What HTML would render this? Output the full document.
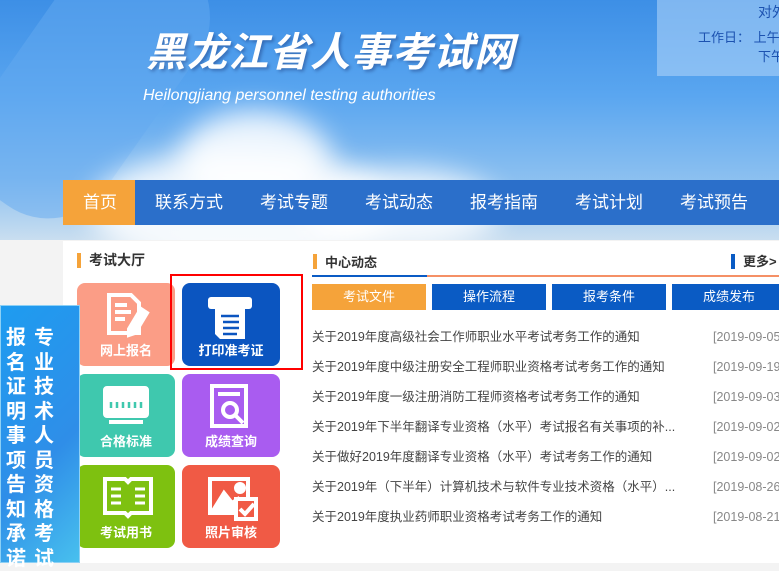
<!DOCTYPE html>
<html><head><meta charset="utf-8"><style>
*{margin:0;padding:0;box-sizing:border-box}
body{width:779px;height:563px;overflow:hidden;position:relative;font-family:"Liberation Sans","Noto Sans CJK SC",sans-serif;background:#f3f3f3}
.hdr{position:absolute;left:0;top:0;width:779px;height:240px;background:linear-gradient(180deg,#3d8fe6 0%,#5aa6f0 40%,#8cc0f0 75%,#c9def0 100%);overflow:hidden}
.cloud{position:absolute;border-radius:50%;background:rgba(255,255,255,.85);filter:blur(14px)}
.title{position:absolute;left:146px;top:28px;font-size:40px;line-height:50px;color:#fff;font-style:italic;font-weight:bold;letter-spacing:1px;text-shadow:2px 2px 3px rgba(0,0,60,.3);white-space:nowrap}
.sub{position:absolute;left:143px;top:87px;font-size:16px;color:#fff;font-style:italic;white-space:nowrap}
.box{position:absolute;left:657px;top:0;width:122px;height:76px;background:rgba(180,215,250,.55)}
.hdr .t{position:absolute;white-space:nowrap;color:#1c52b0;font-size:13px;line-height:16px}
.nav{position:absolute;left:63px;top:180px;width:716px;height:45px;background:#2b6fca;display:flex}
.nav div{color:#fff;font-size:17px;line-height:45px;padding:0 0 0 20px;width:105px;white-space:nowrap}
.nav .on{background:#f5a33a;width:72px}
.panel{position:absolute;left:63px;top:241px;width:716px;height:322px;background:#fff}
.lbl{position:absolute;font-size:14px;color:#333;font-weight:bold;line-height:16px;white-space:nowrap}
.bar{position:absolute;width:4px;height:15px}
.tile{position:absolute;width:98px;height:83px;border-radius:8px;color:#fff;font-size:13px;font-weight:bold;text-align:center}
.tile span{position:absolute;left:0;right:0;bottom:7px}
.tile svg{position:absolute;left:24px;top:8px}
.ban{position:absolute;left:0;top:305px;width:80px;height:258px;background:linear-gradient(135deg,#1e9cf0,#2f8ee8 60%,#48c0ee);border:1px solid #8cd0f5}
.vt{position:absolute;top:20px;width:22px;font-size:20px;line-height:24.5px;color:#fff;font-weight:bold;text-align:center}
.tab{position:absolute;top:284px;height:26px;width:114px;background:#0a5bc4;color:#fff;font-size:13px;text-align:center;line-height:26px}
.news{position:absolute;left:312px;font-size:12.5px;line-height:16px;height:16px;color:#444;width:467px;white-space:nowrap}
.news b{font-weight:normal;position:absolute;left:401px;color:#888;top:0;line-height:16px;white-space:nowrap}
</style></head><body>
<div class="hdr">
 <div style="position:absolute;left:15px;top:-70px;width:150px;height:300px;border-radius:70px;background:rgba(100,170,240,.5);transform:rotate(35deg)"></div>
 <div class="cloud" style="left:90px;top:150px;width:300px;height:120px"></div>
 <div class="cloud" style="left:180px;top:110px;width:150px;height:100px"></div>
 <div class="cloud" style="left:300px;top:170px;width:200px;height:80px"></div>
 <div class="box"></div>
 <div class="t" style="left:758px;top:4px;font-size:14px">对外</div>
 <div class="t" style="left:698px;top:30px">工作日：&nbsp;上午</div>
 <div class="t" style="left:758px;top:49px">下午</div>
 <div class="title">黑龙江省人事考试网</div>
 <div class="sub">Heilongjiang personnel testing authorities</div>
</div>
<div class="nav"><div class="on">首页</div><div>联系方式</div><div>考试专题</div><div>考试动态</div><div>报考指南</div><div>考试计划</div><div>考试预告</div></div>
<div class="panel"></div>
<div class="bar" style="left:77px;top:253px;background:#f5a33a"></div>
<div class="lbl" style="left:89px;top:252px">考试大厅</div>
<div class="tile" style="left:77px;top:283px;background:#fb9d86"><svg width="50" height="50" viewBox="0 0 50 50" fill="none" stroke="#fff" stroke-width="4"><path d="M8 4h22l8 8v30H8z"/><path d="M14 14h12M14 21h16M14 28h10"/><path d="M40 18l6 4-12 20-6 2 0-6z" fill="#fff"/></svg><span>网上报名</span></div>
<div class="tile" style="left:182px;top:283px;background:#0b55c0"><svg width="50" height="52" viewBox="0 0 50 52" fill="#fff"><rect x="2" y="6" width="44" height="12" rx="3"/><path d="M9 18h30v30H14l-5-5z"/><g stroke="#0b55c0" stroke-width="2.5"><path d="M15 25h18M17 31h16M17 37h16M17 43h14"/></g></svg><span>打印准考证</span></div>
<div style="position:absolute;left:170px;top:274px;width:133px;height:96px;border:2px solid #f00"></div>
<div class="tile" style="left:77px;top:374px;background:#3fc8ae"><svg width="50" height="50" viewBox="0 0 50 50" fill="none" stroke="#fff" stroke-width="4"><rect x="4" y="6" width="42" height="28" rx="2" fill="#fff"/><path d="M10 26v-6M16 26v-6M22 26v-6M28 26v-6M34 26v-6M40 26v-6" stroke="#3fc8ae" stroke-width="2.5"/><path d="M8 40h34"/></svg><span>合格标准</span></div>
<div class="tile" style="left:182px;top:374px;background:#a95cf0"><svg width="50" height="50" viewBox="0 0 50 50" fill="none" stroke="#fff" stroke-width="4"><rect x="6" y="4" width="34" height="40"/><path d="M12 12h22"/><circle cx="24" cy="28" r="7"/><path d="M29 33l8 8"/></svg><span>成绩查询</span></div>
<div class="tile" style="left:77px;top:465px;background:#7ec110"><svg width="54" height="50" viewBox="0 0 54 50" fill="none" stroke="#fff" stroke-width="4"><path d="M4 6h20l3 3 3-3h20v34H30l-3 3-3-3H4z"/><path d="M10 16h10M10 23h10M10 30h10M34 16h10M34 23h10M34 30h10" stroke-width="3"/></svg><span>考试用书</span></div>
<div class="tile" style="left:182px;top:465px;background:#f05a45"><svg width="54" height="50" viewBox="0 0 54 50" fill="none" stroke="#fff" stroke-width="4"><rect x="4" y="6" width="38" height="34"/><path d="M8 36l10-16 8 10 6-4 6 10z" fill="#fff"/><circle cx="34" cy="15" r="4" fill="#fff"/><rect x="30" y="26" width="20" height="20" fill="#f05a45"/><path d="M34 36l5 5 9-10"/></svg><span>照片审核</span></div>
<div class="ban"><div class="vt" style="left:4px">报名证明事项告知承诺</div><div class="vt" style="left:32px">专业技术人员资格考试</div></div>
<div class="bar" style="left:313px;top:254px;background:#f5a33a"></div>
<div class="lbl" style="left:325px;top:255px;font-size:13px">中心动态</div>
<div class="bar" style="left:731px;top:254px;background:#0a5bc4"></div>
<div class="lbl" style="left:743px;top:254px;font-size:13px">更多&gt;</div>
<div style="position:absolute;left:312px;top:275px;width:115px;height:2px;background:#0a5bc4"></div>
<div style="position:absolute;left:427px;top:275px;width:352px;height:2px;background:#f59066"></div>
<div class="tab" style="left:312px;background:#f5a33a">考试文件</div>
<div class="tab" style="left:432px">操作流程</div>
<div class="tab" style="left:552px">报考条件</div>
<div class="tab" style="left:672px">成绩发布</div>
<div class="news" style="top:329px">关于2019年度高级社会工作师职业水平考试考务工作的通知<b>[2019-09-05]</b></div>
<div class="news" style="top:359px">关于2019年度中级注册安全工程师职业资格考试考务工作的通知<b>[2019-09-19]</b></div>
<div class="news" style="top:389px">关于2019年度一级注册消防工程师资格考试考务工作的通知<b>[2019-09-03]</b></div>
<div class="news" style="top:419px">关于2019年下半年翻译专业资格（水平）考试报名有关事项的补...<b>[2019-09-02]</b></div>
<div class="news" style="top:449px">关于做好2019年度翻译专业资格（水平）考试考务工作的通知<b>[2019-09-02]</b></div>
<div class="news" style="top:479px">关于2019年（下半年）计算机技术与软件专业技术资格（水平）...<b>[2019-08-26]</b></div>
<div class="news" style="top:509px">关于2019年度执业药师职业资格考试考务工作的通知<b>[2019-08-21]</b></div>
</body></html>
